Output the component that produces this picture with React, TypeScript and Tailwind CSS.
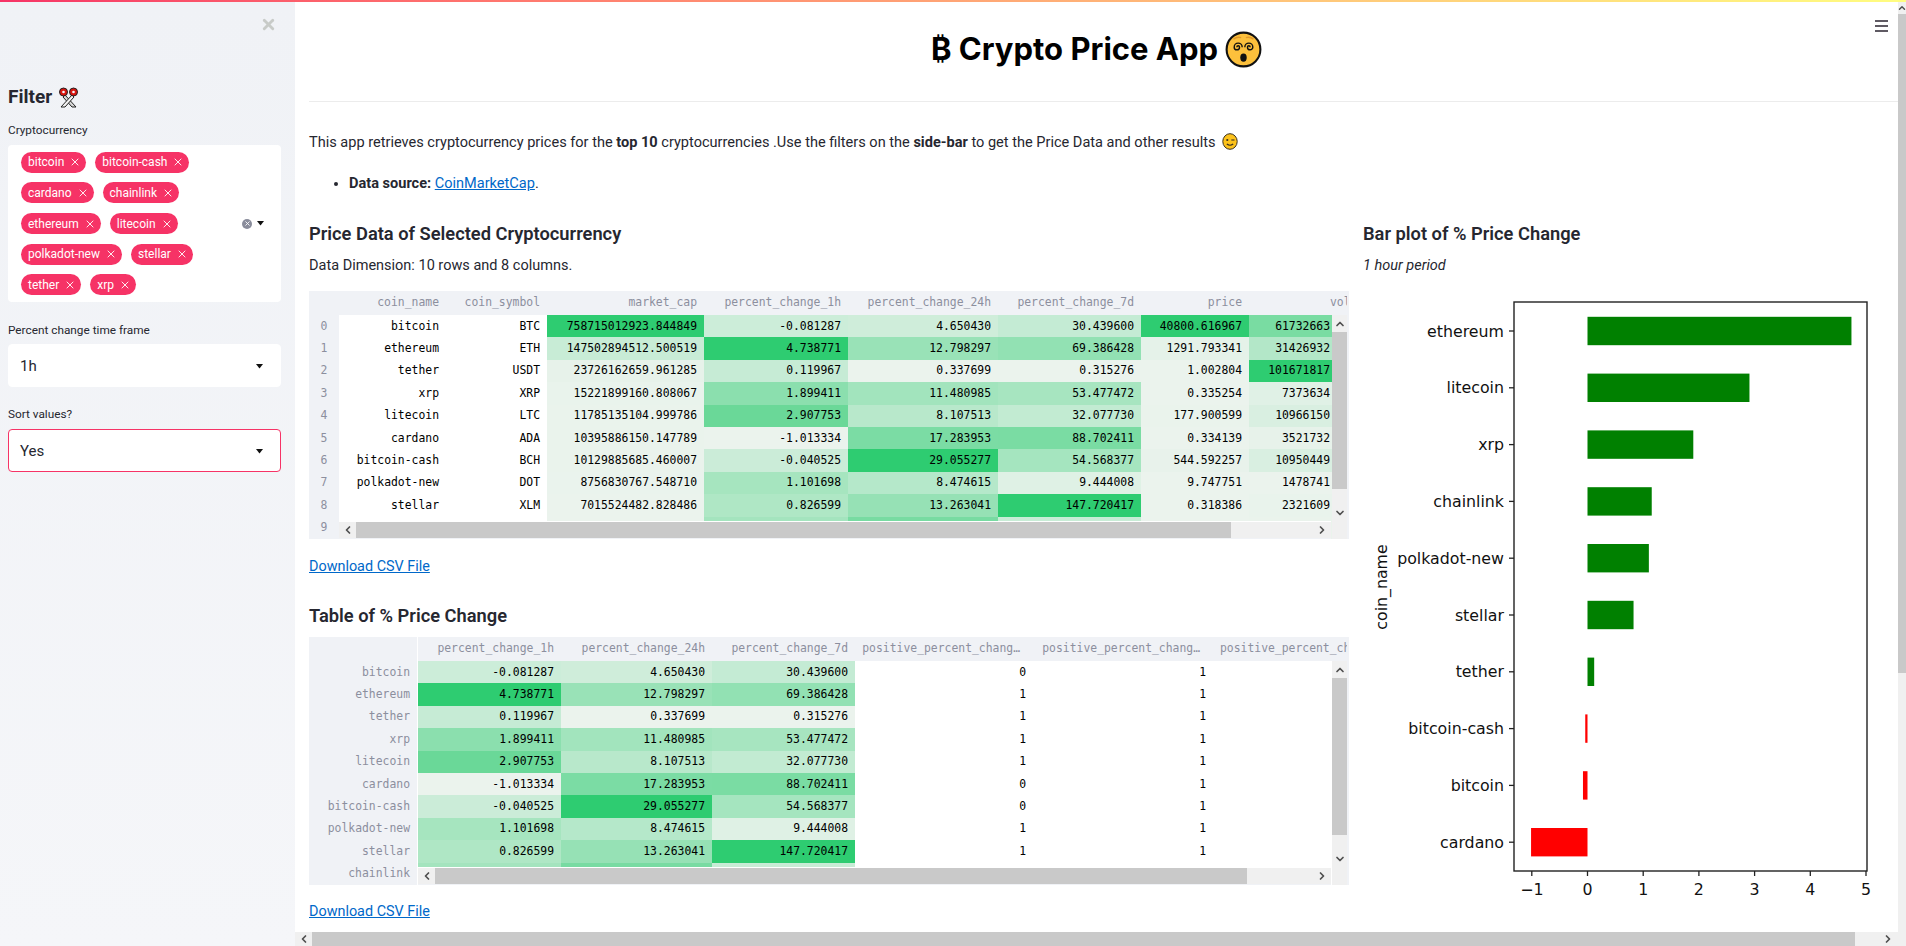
import { ChevronDown, ChevronLeft, ChevronRight, ChevronUp, X } from 'lucide-react';

type Coin = {
  name: string;
  symbol: string;
  cap: string;
  h1: string;
  h24: string;
  d7: string;
  price: string;
  vol: string;
};

// vol is only the part of the column that shows before the table's scrollbar
const coins: Coin[] = [
  { name: 'bitcoin', symbol: 'BTC', cap: '758715012923.844849', h1: '-0.081287', h24: '4.650430', d7: '30.439600', price: '40800.616967', vol: '61732663' },
  { name: 'ethereum', symbol: 'ETH', cap: '147502894512.500519', h1: '4.738771', h24: '12.798297', d7: '69.386428', price: '1291.793341', vol: '31426932' },
  { name: 'tether', symbol: 'USDT', cap: '23726162659.961285', h1: '0.119967', h24: '0.337699', d7: '0.315276', price: '1.002804', vol: '101671817' },
  { name: 'xrp', symbol: 'XRP', cap: '15221899160.808067', h1: '1.899411', h24: '11.480985', d7: '53.477472', price: '0.335254', vol: '7373634' },
  { name: 'litecoin', symbol: 'LTC', cap: '11785135104.999786', h1: '2.907753', h24: '8.107513', d7: '32.077730', price: '177.900599', vol: '10966150' },
  { name: 'cardano', symbol: 'ADA', cap: '10395886150.147789', h1: '-1.013334', h24: '17.283953', d7: '88.702411', price: '0.334139', vol: '3521732' },
  { name: 'bitcoin-cash', symbol: 'BCH', cap: '10129885685.460007', h1: '-0.040525', h24: '29.055277', d7: '54.568377', price: '544.592257', vol: '10950449' },
  { name: 'polkadot-new', symbol: 'DOT', cap: '8756830767.548710', h1: '1.101698', h24: '8.474615', d7: '9.444008', price: '9.747751', vol: '1478741' },
  { name: 'stellar', symbol: 'XLM', cap: '7015524482.828486', h1: '0.826599', h24: '13.263041', d7: '147.720417', price: '0.318386', vol: '2321609' },
  { name: 'chainlink', symbol: '', cap: '6534120588.315072', h1: '1.153220', h24: '17.801126', d7: '27.530914', price: '16.215470', vol: '1985420' },
];

const tags = ['bitcoin', 'bitcoin-cash', 'cardano', 'chainlink', 'ethereum', 'litecoin', 'polkadot-new', 'stellar', 'tether', 'xrp'];

// sorted the way the bar plot draws them
const bars = [
  { name: 'ethereum', value: 4.738771 },
  { name: 'litecoin', value: 2.907753 },
  { name: 'xrp', value: 1.899411 },
  { name: 'chainlink', value: 1.15322 },
  { name: 'polkadot-new', value: 1.101698 },
  { name: 'stellar', value: 0.826599 },
  { name: 'tether', value: 0.119967 },
  { name: 'bitcoin-cash', value: -0.040525 },
  { name: 'bitcoin', value: -0.081287 },
  { name: 'cardano', value: -1.013334 },
];

function heat(key: 'cap' | 'h1' | 'h24' | 'd7' | 'price' | 'vol', value: string) {
  const nums = coins.map((c) => parseFloat(c[key]));
  const min = Math.min(...nums);
  const max = Math.max(...nums);
  const t = (parseFloat(value) - min) / (max - min);
  const mix = (a: number, b: number) => Math.round(a + (b - a) * t);
  return `rgb(${mix(235, 46)}, ${mix(243, 204)}, ${mix(237, 113)})`;
}

function Head({ children, className = '' }: { children?: React.ReactNode; className?: string }) {
  return (
    <div className={`flex items-center justify-end pr-[7px] whitespace-nowrap overflow-hidden text-[#8c8f9e] ${className}`}>
      {children}
    </div>
  );
}

function Cell({ children, color, className = '' }: { children?: React.ReactNode; color?: string; className?: string }) {
  return (
    <div
      className={`flex items-center justify-end pr-[7px] whitespace-nowrap overflow-hidden bg-white text-black ${className}`}
      style={color ? { backgroundColor: color } : undefined}
    >
      {children}
    </div>
  );
}

function TableScrollbars({ left, thumbWidth }: { left: string; thumbWidth: string }) {
  return (
    <>
      <div className={`absolute bottom-0 right-[18px] h-[18px] flex items-center bg-[#f0f0f0] border-t border-b border-t-white border-b-[#f0f2f6] ${left}`}>
        <div className="w-[17px] flex justify-center text-[#505050]">
          <ChevronLeft size={12} strokeWidth={3.5} />
        </div>
        <div className={`h-full bg-[#c9c9c9] ${thumbWidth}`} />
        <div className="flex-1 flex justify-end pr-[3px] text-[#505050]">
          <ChevronRight size={12} strokeWidth={3.5} />
        </div>
      </div>
      <div className="absolute top-[24px] right-[2px] bottom-0 w-[15px] flex flex-col items-center bg-[#f0f0f0]">
        <div className="h-[17px] flex items-center text-[#505050]">
          <ChevronUp size={12} strokeWidth={3.5} />
        </div>
        <div className="h-[157px] w-full bg-[#c9c9c9]" />
        <div className="flex-1 flex items-end pb-[20px] text-[#505050]">
          <ChevronDown size={12} strokeWidth={3.5} />
        </div>
      </div>
    </>
  );
}

function PriceTable() {
  return (
    <div className="relative w-[1040px] h-[248px] overflow-hidden bg-[#f0f2f6] font-['DejaVu_Sans_Mono',monospace] text-[11.4px]">
      <div className="grid w-max grid-cols-[30px_107px_101px_157px_144px_150px_143px_108px_98px] grid-rows-[24px_repeat(10,22.4px)]">
        <Head />
        <Head>coin_name</Head>
        <Head>coin_symbol</Head>
        <Head>market_cap</Head>
        <Head>percent_change_1h</Head>
        <Head>percent_change_24h</Head>
        <Head>percent_change_7d</Head>
        <Head>price</Head>
        <Head className="!justify-start !pr-0 pl-[81px]">vol</Head>
        {coins.map((c, i) => (
          <div key={c.name} className="contents">
            <Head className="!justify-center !pr-0">{i}</Head>
            {i < 9 ? <Cell>{c.name}</Cell> : <Cell />}
            <Cell>{c.symbol}</Cell>
            <Cell color={heat('cap', c.cap)}>{i < 9 ? c.cap : ''}</Cell>
            <Cell color={heat('h1', c.h1)}>{i < 9 ? c.h1 : ''}</Cell>
            <Cell color={heat('h24', c.h24)}>{i < 9 ? c.h24 : ''}</Cell>
            <Cell color={heat('d7', c.d7)}>{i < 9 ? c.d7 : ''}</Cell>
            <Cell color={heat('price', c.price)}>{i < 9 ? c.price : ''}</Cell>
            <Cell color={heat('vol', c.vol)} className="!pr-[17px]">
              {i < 9 ? c.vol : ''}
            </Cell>
          </div>
        ))}
      </div>
      <TableScrollbars left="left-[30px]" thumbWidth="w-[875px]" />
    </div>
  );
}

function ChangeTable() {
  return (
    <div className="relative w-[1040px] h-[248px] overflow-hidden bg-[#f0f2f6] font-['DejaVu_Sans_Mono',monospace] text-[11.4px]">
      <div className="grid w-max grid-cols-[109px_143px_151px_143px_178px_180px_134px] grid-rows-[24px_repeat(10,22.4px)]">
        <Head className="border-r border-white" />
        <Head>percent_change_1h</Head>
        <Head>percent_change_24h</Head>
        <Head>percent_change_7d</Head>
        <Head className="!pr-[13px]">positive_percent_chang…</Head>
        <Head className="!pr-[13px]">positive_percent_chang…</Head>
        <Head className="!justify-start !pr-0 pl-[7px]">positive_percent_ch</Head>
        {coins.map((c, i) => (
          <div key={c.name} className="contents">
            <Head className="border-r border-white">{c.name}</Head>
            <Cell color={heat('h1', c.h1)}>{i < 9 ? c.h1 : ''}</Cell>
            <Cell color={heat('h24', c.h24)}>{i < 9 ? c.h24 : ''}</Cell>
            <Cell color={heat('d7', c.d7)}>{i < 9 ? c.d7 : ''}</Cell>
            <Cell>{i < 9 ? (parseFloat(c.h1) > 0 ? 1 : 0) : ''}</Cell>
            <Cell>{i < 9 ? 1 : ''}</Cell>
            <Cell />
          </div>
        ))}
      </div>
      <TableScrollbars left="left-[109px]" thumbWidth="w-[812px]" />
    </div>
  );
}

function Tag({ label }: { label: string }) {
  return (
    <span className="h-[21px] flex items-center rounded-full bg-[#f63366] pl-[7px] pr-[5px] text-[12px] text-white">
      {label}
      <X size={12} strokeWidth={1.8} className="ml-[5px]" />
    </span>
  );
}

function Caret() {
  return (
    <svg width="8" height="5" viewBox="0 0 8 5" fill="#111" className="shrink-0">
      <path d="M0 0h7L3.5 4.5z" />
    </svg>
  );
}

function Select({ value, focused }: { value: string; focused?: boolean }) {
  return (
    <div
      className={`h-[43px] flex items-center justify-between rounded-[4px] bg-white pl-[11px] pr-[16px] pt-[1px] text-[15px] text-[#262730] border ${
        focused ? 'border-[#f63366]' : 'border-white'
      }`}
    >
      {value}
      <Caret />
    </div>
  );
}

function Scissors() {
  return (
    <svg width="21" height="21" viewBox="0 0 21 21" className="ml-[6px]">
      <path d="M7 8 L18 20 L14 20 L5 10z" fill="#d8d8d8" stroke="#222" strokeWidth="1" />
      <path d="M14 8 L3 20 L7 20 L16 10z" fill="#f2f2f2" stroke="#222" strokeWidth="1" />
      <circle cx="5.5" cy="5" r="4" fill="#d9140f" stroke="#222" strokeWidth="1" />
      <circle cx="15.5" cy="5" r="4" fill="#d9140f" stroke="#222" strokeWidth="1" />
      <circle cx="5.5" cy="5" r="1.3" fill="#f4f5f8" />
      <circle cx="15.5" cy="5" r="1.3" fill="#f4f5f8" />
    </svg>
  );
}

function ShockedFace() {
  return (
    <svg width="37" height="37" viewBox="0 0 39 39" className="ml-[7px]">
      <circle cx="19.5" cy="19.5" r="17.8" fill="#fcc03c" stroke="#111" strokeWidth="2.2" />
      <path d="M9 8.5 q4-3 8-1.5 M22 7 q4-1.5 8 1.5" fill="none" stroke="#e0982a" strokeWidth="1.6" />
      <path d="M12.5 17 a1.4 1.4 0 0 1 2.8 0 a2.8 2.8 0 0 1-5.6 0 a4.2 4.2 0 0 1 8.4 0" fill="none" stroke="#111" strokeWidth="1.5" />
      <path d="M26.5 17 a1.4 1.4 0 0 0-2.8 0 a2.8 2.8 0 0 0 5.6 0 a4.2 4.2 0 0 0-8.4 0" fill="none" stroke="#111" strokeWidth="1.5" />
      <ellipse cx="19.5" cy="28" rx="3.4" ry="4.4" fill="#111" />
    </svg>
  );
}

function WinkFace() {
  return (
    <svg width="16" height="17" viewBox="0 0 16 17" className="inline-block ml-[6px] align-[-3px]">
      <ellipse cx="8" cy="8.5" rx="7.2" ry="7.8" fill="#fcc21b" stroke="#3a3020" strokeWidth="1" />
      <circle cx="5.3" cy="7" r="1.1" fill="#3a3020" />
      <path d="M9.3 7 h3.2" stroke="#3a3020" strokeWidth="1.1" />
      <path d="M4.8 11 q3.2 2.6 6.4 0" fill="none" stroke="#3a3020" strokeWidth="1.1" />
    </svg>
  );
}

function BarChart() {
  const zero = 224.5;
  const unit = 55.7;
  return (
    <svg width="510" height="620" viewBox="0 0 510 620" className="mt-[15px] block">
      {bars.map((b, i) => {
        const y = 40 + 56.8 * i;
        const w = Math.abs(b.value) * unit;
        return (
          <g key={b.name}>
            <rect x={b.value > 0 ? zero : zero - w} y={y - 14.2} width={w} height={28.4} fill={b.value > 0 ? '#008000' : '#ff0000'} />
            <line x1="146" x2="151" y1={y} y2={y} stroke="#222" strokeWidth="1.3" />
            <text x="141" y={y + 5.5} textAnchor="end" fontSize="15.8" fill="#111" fontFamily="'DejaVu Sans', sans-serif">
              {b.name}
            </text>
          </g>
        );
      })}
      <rect x="151" y="11" width="353" height="569" fill="none" stroke="#222" strokeWidth="1.4" />
      {[-1, 0, 1, 2, 3, 4, 5].map((t) => {
        const x = zero + t * unit;
        return (
          <g key={t}>
            <line x1={x} x2={x} y1="580" y2="585" stroke="#222" strokeWidth="1.3" />
            <text x={x} y="604" textAnchor="middle" fontSize="15.8" fill="#111" fontFamily="'DejaVu Sans', sans-serif">
              {t < 0 ? `\u2212${-t}` : t}
            </text>
          </g>
        );
      })}
      <text
        x="0"
        y="0"
        transform="translate(24 296) rotate(-90)"
        textAnchor="middle"
        fontSize="15.8"
        fill="#111"
        fontFamily="'DejaVu Sans', sans-serif"
      >
        coin_name
      </text>
    </svg>
  );
}

export default function App() {
  return (
    <div className="h-screen w-screen overflow-hidden flex flex-col bg-white text-[#262730] font-['Roboto',sans-serif]">
      <div className="h-[2px] shrink-0 bg-gradient-to-r from-[#f63366] to-[#fffd80]" />
      <div className="flex-1 min-h-0 flex">
        <aside className="w-[295px] shrink-0 bg-gradient-to-b from-[#f0f2f6] to-[#f5f6f9] pl-[8px] pr-[14px] flex flex-col">
          <div className="h-[44px] flex items-center justify-end pr-[4px] text-[#c8cbc8]">
            <X size={17} strokeWidth={4} />
          </div>
          <div className="mt-[38px] h-[26px] flex items-center text-[19px] font-bold">
            Filter
            <Scissors />
          </div>
          <label className="mt-[12px] h-[16px] text-[11.8px] leading-[16px]">Cryptocurrency</label>
          <div className="mt-[7px] h-[157px] rounded-[4px] bg-white flex items-center">
            <div className="w-[210px] ml-[13px] flex flex-wrap gap-x-[9px] gap-y-[9.7px]">
              {tags.map((t) => (
                <Tag key={t} label={t} />
              ))}
            </div>
            <div className="flex items-center gap-[5px] ml-[11px]">
              <div className="w-[10px] h-[10px] rounded-full bg-[#8a8d9c] flex items-center justify-center text-white">
                <X size={7} strokeWidth={3} />
              </div>
              <Caret />
            </div>
          </div>
          <label className="mt-[20px] h-[16px] text-[11.8px] leading-[16px]">Percent change time frame</label>
          <div className="mt-[6px]">
            <Select value="1h" />
          </div>
          <label className="mt-[19px] h-[16px] text-[11.8px] leading-[16px]">Sort values?</label>
          <div className="mt-[7px]">
            <Select value="Yes" focused />
          </div>
        </aside>

        <div className="flex-1 min-w-0 flex flex-col">
          <div className="flex-1 min-h-0 flex">
            <main className="relative flex-1 min-w-0 overflow-hidden pl-[14px]">
              <div className="absolute top-[18px] right-[10px] w-[13px] flex flex-col gap-[3px]">
                <div className="h-[2px] bg-[#5f5a63]" />
                <div className="h-[2px] bg-[#5f5a63]" />
                <div className="h-[2px] bg-[#5f5a63]" />
              </div>
              <div className="h-[100px] flex items-center justify-center border-b border-[#ececec] pb-[5px] pr-[14px] text-black">
                <h1 className="flex items-center text-[31px] font-bold font-['Inter',sans-serif]">
                  ₿ Crypto Price App
                  <ShockedFace />
                </h1>
              </div>
              <p className="mt-[30px] h-[22px] leading-[22px] text-[14.55px]">
                This app retrieves cryptocurrency prices for the <b>top 10</b> cryptocurrencies .Use the filters on the{' '}
                <b>side-bar</b> to get the Price Data and other results
                <WinkFace />
              </p>
              <ul className="mt-[19px] ml-[40px] h-[22px] leading-[22px] text-[14.55px] list-disc">
                <li>
                  <b>Data source:</b>{' '}
                  <a href="#" className="text-[#0068c9] underline">
                    CoinMarketCap
                  </a>
                  .
                </li>
              </ul>
              <div className="mt-[25px] flex gap-[14px]">
                <section className="w-[1040px] shrink-0">
                  <h2 className="h-[28px] leading-[28px] text-[18.3px] font-semibold">Price Data of Selected Cryptocurrency</h2>
                  <p className="mt-[8px] h-[20px] leading-[20px] text-[14.5px]">Data Dimension: 10 rows and 8 columns.</p>
                  <div className="mt-[15px]">
                    <PriceTable />
                  </div>
                  <a href="#" className="block mt-[18px] h-[20px] leading-[20px] text-[14.4px] text-[#0068c9] underline">
                    Download CSV File
                  </a>
                  <h2 className="mt-[25px] h-[28px] leading-[28px] text-[18.3px] font-semibold">Table of % Price Change</h2>
                  <div className="mt-[7px]">
                    <ChangeTable />
                  </div>
                  <a href="#" className="block mt-[17px] h-[20px] leading-[20px] text-[14.4px] text-[#0068c9] underline">
                    Download CSV File
                  </a>
                </section>
                <section className="flex-1 min-w-0">
                  <h2 className="h-[28px] leading-[28px] text-[18.3px] font-semibold">Bar plot of % Price Change</h2>
                  <p className="mt-[8px] h-[20px] leading-[20px] text-[14.5px] italic">1 hour period</p>
                  <BarChart />
                </section>
              </div>
            </main>
            <div className="w-[8px] shrink-0 flex flex-col items-center bg-[#f0f0f0] overflow-hidden">
              <div className="h-[12px] flex items-center text-[#505050]">
                <ChevronUp size={10} strokeWidth={3.5} />
              </div>
              <div className="h-[659px] w-full bg-[#c9c9c9]" />
            </div>
          </div>
          <div className="h-[14px] shrink-0 flex items-center bg-[#f0f0f0]">
            <div className="w-[17px] flex justify-center text-[#505050]">
              <ChevronLeft size={12} strokeWidth={3.5} />
            </div>
            <div className="w-[1543px] h-full bg-[#c9c9c9]" />
            <div className="flex-1 flex justify-end pr-[12px] text-[#505050]">
              <ChevronRight size={12} strokeWidth={3.5} />
            </div>
          </div>
        </div>
      </div>
    </div>
  );
}
